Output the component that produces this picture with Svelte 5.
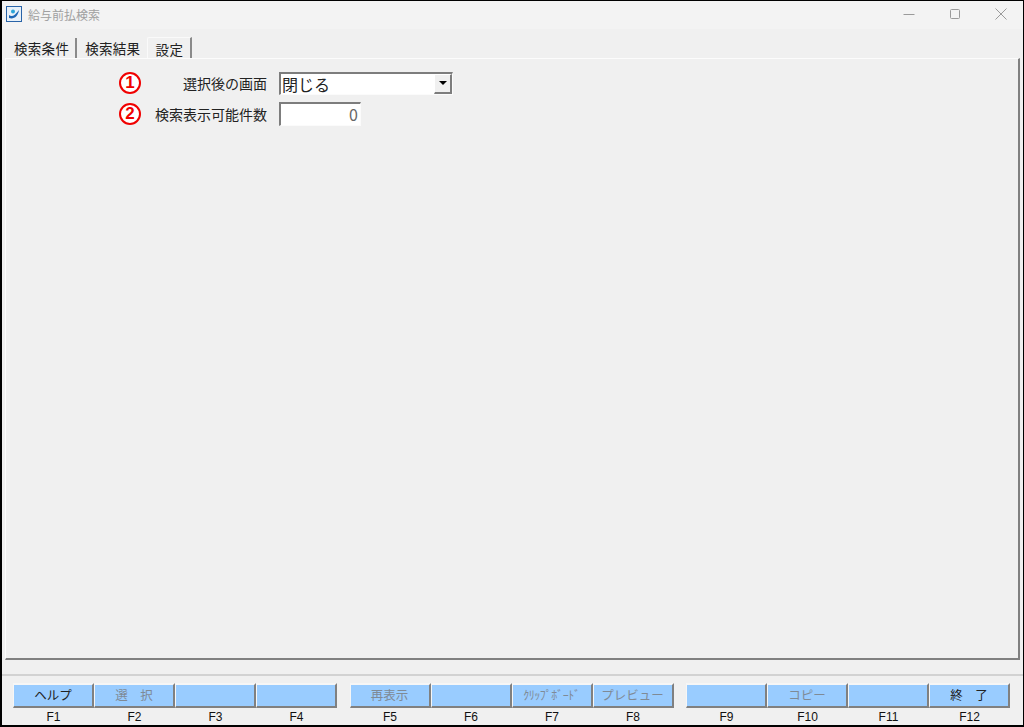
<script>
  const groups = [
    [{ t: 'ヘルプ', f: 'F1' }, { t: '選　択', f: 'F2', d: true }, { t: '', f: 'F3' }, { t: '', f: 'F4' }],
    [{ t: '再表示', f: 'F5', d: true }, { t: '', f: 'F6' }, { t: 'ｸﾘｯﾌﾟﾎﾞｰﾄﾞ', f: 'F7', d: true, n: true }, { t: 'プレビュー', f: 'F8', d: true }],
    [{ t: '', f: 'F9' }, { t: 'コピー', f: 'F10', d: true }, { t: '', f: 'F11' }, { t: '終　了', f: 'F12' }]
  ];
</script>

<div class="win">
  <header class="title">
    <svg class="appicon" width="16" height="16" viewBox="0 0 16 16">
      <rect x="0.500" y="0.500" width="15" height="15" fill="#e8f1f9" stroke="#2a64a8" />
      <path d="M3 9c3 2.500 6 .5 10-5-1 6.500-5 9.500-10 8z" fill="#1d67b5" />
      <circle cx="7" cy="5.500" r="2" fill="#2aa5d8" />
    </svg>
    <span class="caption">給与前払検索</span>
    <div class="controls">
      <svg width="14" height="14" viewBox="0 0 14 14"><path d="M1.500 7.500h11" stroke="#9a9a9a" /></svg>
      <svg width="14" height="14" viewBox="0 0 14 14"><rect x="2.500" y="2.500" width="9" height="9" rx="1" fill="none" stroke="#9a9a9a" /></svg>
      <svg width="14" height="14" viewBox="0 0 14 14"><path d="M1.500 1.500l11 11M12.500 1.500l-11 11" stroke="#9a9a9a" /></svg>
    </div>
  </header>

  <nav class="tabs">
    <span class="tab">検索条件</span>
    <span class="tab last">検索結果</span>
    <span class="tab active">設定</span>
  </nav>

  <main class="panel">
    <div class="row first">
      <span class="num">1</span>
      <span class="label">選択後の画面</span>
      <div class="select">
        <span class="value">閉じる</span>
        <span class="arrow"><i></i></span>
      </div>
    </div>
    <div class="row second">
      <span class="num">2</span>
      <span class="label">検索表示可能件数</span>
      <div class="input">0</div>
    </div>
  </main>

  <footer class="bar">
    {#each groups as g}
      <div class="group">
        {#each g as b}
          <div class="key">
            <div class="btn" class:dis={b.d} class:narrow={b.n}>{b.t}</div>
            <div class="fn">{b.f}</div>
          </div>
        {/each}
      </div>
    {/each}
  </footer>
</div>

<style>
  :global(body) {
    margin: 0;
    background: #f0f0f0;
  }
  .win {
    box-sizing: border-box;
    width: 1024px;
    height: 727px;
    border: 1px solid #000;
    border-left-width: 2px;
    border-bottom-width: 2px;
    background: #f0f0f0;
    display: flex;
    flex-direction: column;
    font-family: "Noto Sans CJK JP", "Liberation Sans", sans-serif;
    color: #222;
    overflow: hidden;
  }
  .title {
    height: 28px;
    flex: none;
    box-sizing: border-box;
    display: flex;
    align-items: center;
    padding: 0 0 2px 4px;
    background: #f3f3f3;
  }
  .appicon {
    flex: none;
  }
  .caption {
    margin-left: 6px;
    font-size: 12px;
    color: #a0a0a0;
  }
  .controls {
    margin-left: auto;
    display: flex;
    gap: 32px;
    padding-right: 15px;
  }
  .controls svg {
    display: block;
  }
  .tabs {
    height: 29px;
    flex: none;
    display: flex;
    align-items: flex-end;
    padding-left: 4px;
  }
  .tab {
    box-sizing: border-box;
    height: 20px;
    padding: 1px 6px 0 8px;
    font-size: 13.500px;
    line-height: 19px;
    letter-spacing: 0.300px;
    border-right: 2px solid #8a8a8a;
    white-space: nowrap;
  }
  .tab.last {
    border-right: 0;
    padding-right: 7px;
  }
  .tab.active {
    height: 22px;
    padding: 0 7px 0 7px;
    border-top: 1px solid #fafafa;
    border-left: 1px solid #fafafa;
    border-right: 2px solid #8a8a8a;
    letter-spacing: 0.500px;
    line-height: 22px;
    border-top-left-radius: 2px;
    position: relative;
    top: 1px;
    background: #f0f0f0;
  }
  .panel {
    flex: none;
    box-sizing: border-box;
    height: 602px;
    margin: 0 3px;
    border-top: 1px solid #fcfcfc;
    border-left: 1px solid #fcfcfc;
    border-right: 2px solid #808080;
    border-bottom: 2px solid #808080;
    position: relative;
  }
  .row {
    display: flex;
    align-items: center;
    height: 24px;
    padding-left: 113px;
  }
  .first {
    margin-top: 12px;
  }
  .second {
    margin-top: 7px;
  }
  .num {
    box-sizing: border-box;
    width: 22px;
    height: 22px;
    flex: none;
    border: 2.500px solid #f00000;
    border-radius: 50%;
    color: #f00000;
    font: 700 17px/17px "Liberation Sans", sans-serif;
    text-align: center;
    background: #fff;
  }
  .label {
    width: 127px;
    flex: none;
    text-align: right;
    font-size: 14px;
    white-space: nowrap;
    padding-right: 1px;
    box-sizing: border-box;
  }
  .select,
  .input {
    box-sizing: border-box;
    margin-left: 11px;
    height: 23px;
    background: #fff;
    border-top: 2px solid #7d7d7d;
    border-left: 2px solid #7d7d7d;
    border-right: 1px solid #fbfbfb;
    border-bottom: 1px solid #fbfbfb;
  }
  .select {
    width: 174px;
    display: flex;
    align-items: center;
  }
  .value {
    flex: 1;
    font-size: 16px;
    line-height: 20px;
    padding-left: 1px;
  }
  .arrow {
    box-sizing: border-box;
    width: 18px;
    height: 20px;
    background: #f0f0f0;
    border-right: 2px solid #7d7d7d;
    border-bottom: 2px solid #7d7d7d;
    border-top: 1px solid #fff;
    border-left: 1px solid #fff;
    display: flex;
    align-items: center;
    justify-content: center;
  }
  .arrow i {
    width: 0;
    height: 0;
    border-left: 4px solid transparent;
    border-right: 4px solid transparent;
    border-top: 4px solid #000;
  }
  .input {
    width: 82px;
    height: 24px;
    text-align: right;
    font: 16px/20px "Noto Sans CJK JP", sans-serif;
    color: #666;
    padding-right: 2px;
  }
  .bar {
    flex: 1;
    margin-top: 14px;
    border-top: 2px solid #d2d2d2;
    display: flex;
    padding: 7px 0 0 11px;
    gap: 12.500px;
  }
  .group {
    display: flex;
  }
  .key {
    width: 81px;
  }
  .btn {
    box-sizing: border-box;
    height: 25px;
    background: #99ccff;
    border-top: 2px solid #f6f6f6;
    border-left: 1px solid #f6f6f6;
    border-right: 2px solid #808080;
    border-bottom: 2px solid #808080;
    text-align: center;
    font-size: 12.500px;
    line-height: 20px;
    color: #222;
    white-space: pre;
    overflow: hidden;
  }
  .btn.dis {
    color: #7f8a96;
  }
  .btn.narrow {
    font-size: 12px;
    letter-spacing: -0.500px;
  }
  .fn {
    height: 18px;
    text-align: center;
    font: 12px/19px "Liberation Sans", sans-serif;
    color: #111;
  }
</style>
